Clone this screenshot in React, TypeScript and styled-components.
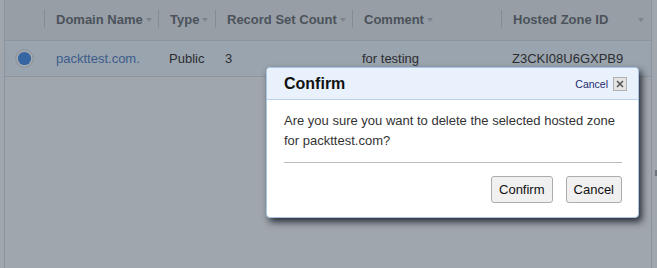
import React from 'react';
import styled, { createGlobalStyle } from 'styled-components';

const Global = createGlobalStyle`
  html, body { margin: 0; padding: 0; }
  body { font-family: "Liberation Sans", Arial, sans-serif; background: #a0a6ad; }
`;

const Page = styled.div`
  position: relative;
  width: 657px;
  height: 268px;
  overflow: hidden;
  display: flex;
  background: #a0a6ad;
`;

const LeftGutter = styled.div`
  width: 5px;
  border-right: 1px solid #8b9299;
`;

const RightGutter = styled.div`
  flex: 1;
  display: flex;
  flex-direction: column;
  padding-top: 170px;
`;

const GutterMark = styled.div`
  width: 2px;
  height: 6px;
  margin-left: 3px;
  background: #6d737a;
`;

const Table = styled.div`
  width: 646px;
  display: flex;
  flex-direction: column;
  border-right: 1px solid #8b9299;
`;

const Grid = styled.div<{ $bg: string }>`
  display: grid;
  grid-template-columns: 39px 114px 57px 137px 149px 150px;
  background: ${(p) => p.$bg};
  border-bottom: 1px solid #8d949b;
`;

const HeadCell = styled.div`
  height: 40px;
  display: flex;
  align-items: center;
  padding-bottom: 2px;
  box-sizing: border-box;
`;

const HeadInner = styled.div<{ $last?: boolean }>`
  flex: 1;
  height: 18px;
  display: flex;
  align-items: center;
  border-left: 1px solid #848b93;
  padding-left: 11px;
  padding-right: ${(p) => (p.$last ? '7px' : '0')};
  font-size: 13px;
  font-weight: bold;
  color: #4b525a;
  white-space: nowrap;
`;

const Arrow = styled.span<{ $push?: boolean }>`
  display: inline-block;
  width: 0;
  height: 0;
  margin-left: ${(p) => (p.$push ? 'auto' : '3px')};
  margin-top: 1px;
  border-left: 3.5px solid transparent;
  border-right: 3.5px solid transparent;
  border-top: 4px solid #7d838b;
`;

const Cell = styled.div<{ $link?: boolean; $pad?: number }>`
  height: 35px;
  display: flex;
  align-items: center;
  padding-left: ${(p) => p.$pad ?? 12}px;
  font-size: 13px;
  color: ${(p) => (p.$link ? '#3a5c8c' : '#2c2d30')};
  white-space: nowrap;
`;

const RadioCell = styled.div`
  height: 35px;
  display: flex;
  align-items: center;
  padding-left: 10px;
`;

const Dialog = styled.div`
  position: absolute;
  left: 266px;
  top: 67px;
  width: 373px;
  box-sizing: border-box;
  background: #fff;
  border: 1px solid #a9c5e6;
  border-radius: 4px;
  box-shadow: 3px 4px 7px rgba(20, 25, 35, 0.85);
  overflow: hidden;
`;

const DialogHead = styled.div`
  height: 31px;
  display: flex;
  align-items: center;
  padding: 0 11px 0 17px;
  background: #e9f1fc;
  border-bottom: 1px solid #b9d2ee;
`;

const Title = styled.div`
  font-size: 16px;
  font-weight: bold;
  color: #111;
`;

const CloseLink = styled.span`
  margin-left: auto;
  font-size: 10.5px;
  color: #1d2b6e;
`;

const CloseBox = styled.span`
  margin-left: 5px;
  width: 12px;
  height: 12px;
  display: flex;
  align-items: center;
  justify-content: center;
  background: #e4e4e4;
  border: 1px solid #b3b3b3;
`;

const DialogBody = styled.div`
  padding: 11px 16px 14px 17px;
`;

const Message = styled.div`
  font-size: 13px;
  line-height: 20px;
  color: #333;
`;

const Divider = styled.div`
  margin-top: 11px;
  border-top: 1px solid #bcbcbc;
`;

const Buttons = styled.div`
  margin-top: 13px;
  display: flex;
  justify-content: flex-end;
  gap: 13px;
`;

const Button = styled.button`
  height: 27px;
  padding: 0 7px;
  font-family: "Liberation Sans", Arial, sans-serif;
  font-size: 13px;
  color: #111;
  background: #f0f0f0;
  border: 1px solid #acacac;
  border-radius: 3px;
`;

const columns = ['Domain Name', 'Type', 'Record Set Count', 'Comment', 'Hosted Zone ID'];

export default function App() {
  return (
    <>
      <Global />
      <Page>
        <LeftGutter />
        <Table>
          <Grid $bg="#979ea6">
            <HeadCell />
            {columns.map((c, i) => {
              const last = i === columns.length - 1;
              return (
                <HeadCell key={c}>
                  <HeadInner $last={last}>
                    {c}
                    <Arrow $push={last} />
                  </HeadInner>
                </HeadCell>
              );
            })}
          </Grid>
          <Grid $bg="#9aa4ae">
            <RadioCell>
              <svg width="19" height="19" viewBox="0 0 19 19">
                <circle cx="9.5" cy="9.5" r="8.7" fill="#a4aab0" stroke="#8a9096" strokeWidth="1" />
                <circle cx="9.5" cy="9.5" r="6.6" fill="#3566a1" />
              </svg>
            </RadioCell>
            <Cell $link>packttest.com.</Cell>
            <Cell $pad={11}>Public</Cell>
            <Cell $pad={10}>3</Cell>
            <Cell $pad={10}>for testing</Cell>
            <Cell $pad={11}>Z3CKI08U6GXPB9</Cell>
          </Grid>
        </Table>
        <RightGutter>
          <GutterMark />
        </RightGutter>

        <Dialog>
          <DialogHead>
            <Title>Confirm</Title>
            <CloseLink>Cancel</CloseLink>
            <CloseBox>
              <svg width="8" height="8" viewBox="0 0 8 8">
                <path d="M1 1L7 7M7 1L1 7" stroke="#555" strokeWidth="1.6" />
              </svg>
            </CloseBox>
          </DialogHead>
          <DialogBody>
            <Message>
              Are you sure you want to delete the selected hosted zone
              <br />
              for packttest.com?
            </Message>
            <Divider />
            <Buttons>
              <Button>Confirm</Button>
              <Button>Cancel</Button>
            </Buttons>
          </DialogBody>
        </Dialog>
      </Page>
    </>
  );
}
